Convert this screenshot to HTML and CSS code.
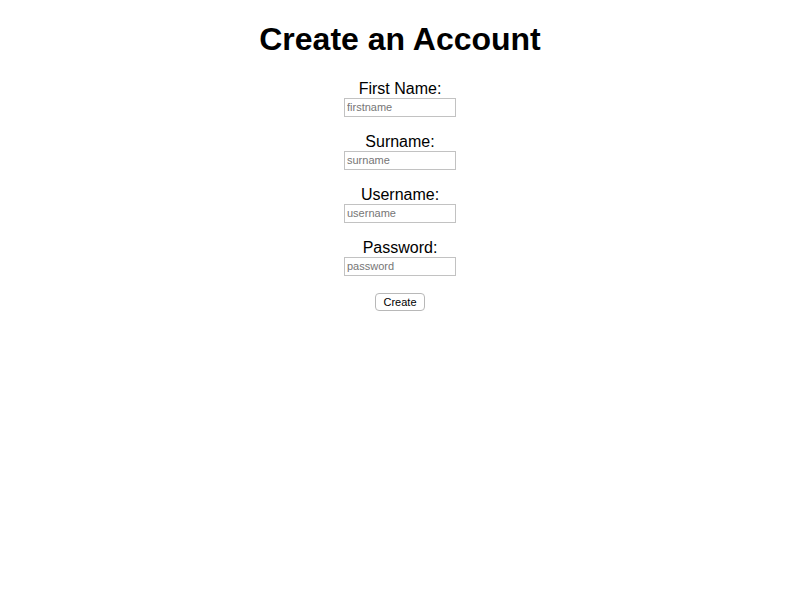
FILE: index.html
```html
<!DOCTYPE html>
<html>
<head>
<meta charset="utf-8">
<title>Create an Account</title>
<link rel="stylesheet" href="styles.css">
</head>
<body>
<h1 class="title">Create an Account</h1>
<form class="form">
  <div class="field">
    <label class="label" for="firstname">First Name:</label>
    <input class="input" id="firstname" type="text" placeholder="firstname">
  </div>
  <div class="field">
    <label class="label" for="surname">Surname:</label>
    <input class="input" id="surname" type="text" placeholder="surname">
  </div>
  <div class="field">
    <label class="label" for="username">Username:</label>
    <input class="input" id="username" type="text" placeholder="username">
  </div>
  <div class="field">
    <label class="label" for="password">Password:</label>
    <input class="input" id="password" type="password" placeholder="password">
  </div>
  <button class="button" type="button">Create</button>
</form>
</body>
</html>
```
FILE: styles.css
```css
html, body {
  background: #ffffff;
}
body {
  margin: 8px;
  font-family: "Liberation Sans", Arial, sans-serif;
  color: #000000;
  text-align: center;
}
.title {
  font-size: 32px;
  font-weight: bold;
  margin: 13.44px 0 21.44px;
  line-height: 36.8px;
}
.form {
  display: flex;
  flex-direction: column;
  align-items: center;
}
.field {
  display: flex;
  flex-direction: column;
  align-items: center;
  margin-bottom: 16px;
}
.label {
  font-size: 16px;
  line-height: 18px;
  height: 18px;
}
.input {
  box-sizing: border-box;
  width: 112px;
  height: 19px;
  margin: 0;
  padding: 1px 2px;
  border: 1px solid #c2c2c2;
  border-radius: 0;
  font-family: "Liberation Sans", Arial, sans-serif;
  font-size: 11px;
  color: #000;
  background: #fff;
  outline: none;
}
.input::placeholder {
  color: #767676;
  opacity: 1;
}
.button {
  box-sizing: border-box;
  width: 50px;
  height: 18px;
  margin-top: 1px;
  padding: 0;
  border: 1px solid #b8b8b8;
  border-radius: 4px;
  background: #ffffff;
  font-family: "Liberation Sans", Arial, sans-serif;
  font-size: 11px;
  color: #000;
  line-height: 16px;
}
```
